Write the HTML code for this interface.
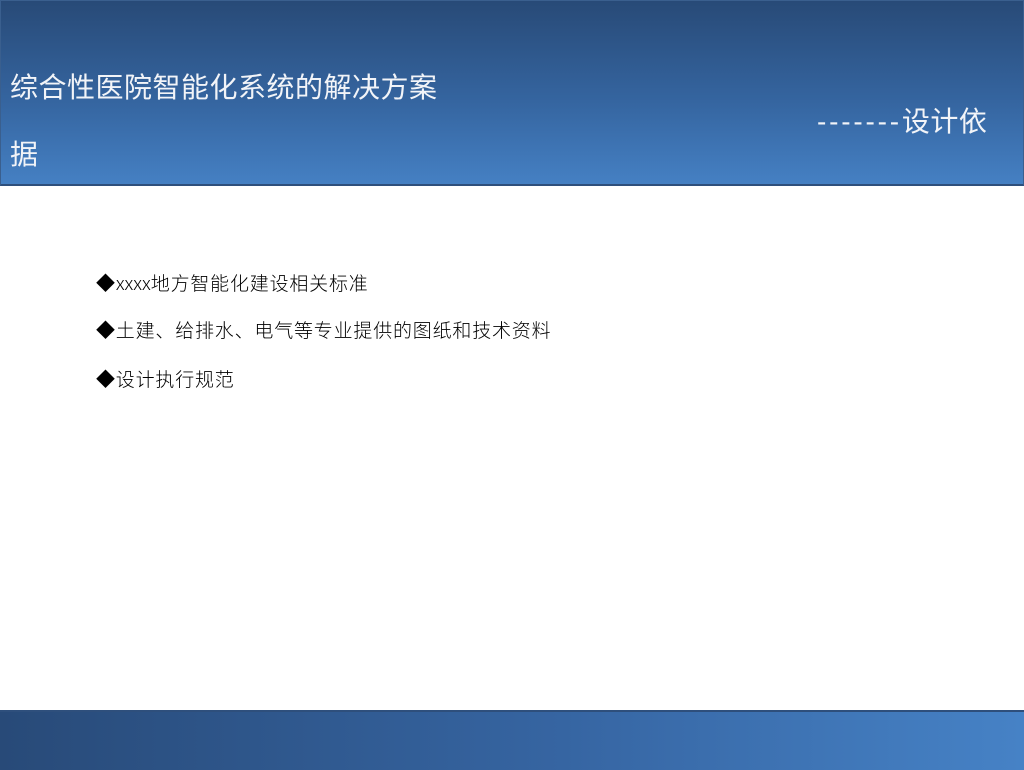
<!DOCTYPE html>
<html><head><meta charset="utf-8"><style>
body{margin:0;width:1024px;height:768px;position:relative;background:#fff;overflow:hidden;font-family:"Liberation Sans","Noto Sans CJK SC",sans-serif}
#hd{position:absolute;left:0;top:0;width:1022px;height:183px;background:linear-gradient(#284a77,#3565a0 55%,#4580c3);border:1px solid #3a5f8e;border-bottom:2px solid #2e4f7c}
.t{position:absolute;color:#f2f4f8;font-size:28px;white-space:nowrap;line-height:1;letter-spacing:0.5px}
#ft{position:absolute;left:0;top:710px;width:1024px;height:58px;background:linear-gradient(90deg,#284a78,#3665a2 55%,#4682c6);border-top:2px solid #2e4f7c}
.li{position:absolute;left:96px;font-size:19px;letter-spacing:0.8px;color:#000;font-family:"Noto Sans CJK SC",sans-serif;font-weight:300;white-space:nowrap;line-height:1}
</style></head><body>
<div id="hd"></div>
<div class="t" style="left:10px;top:74px">综合性医院智能化系统的解决方案</div>
<div class="t" style="left:817px;top:108px"><span style="letter-spacing:2.8px">-------</span>设计依</div>
<div class="t" style="left:10px;top:141px">据</div>
<div class="li" style="top:273px">◆<span style="letter-spacing:0">xxxx</span>地方智能化建设相关标准</div>
<div class="li" style="top:320px">◆土建、给排水、电气等专业提供的图纸和技术资料</div>
<div class="li" style="top:369px">◆设计执行规范</div>
<div id="ft"></div>
</body></html>
